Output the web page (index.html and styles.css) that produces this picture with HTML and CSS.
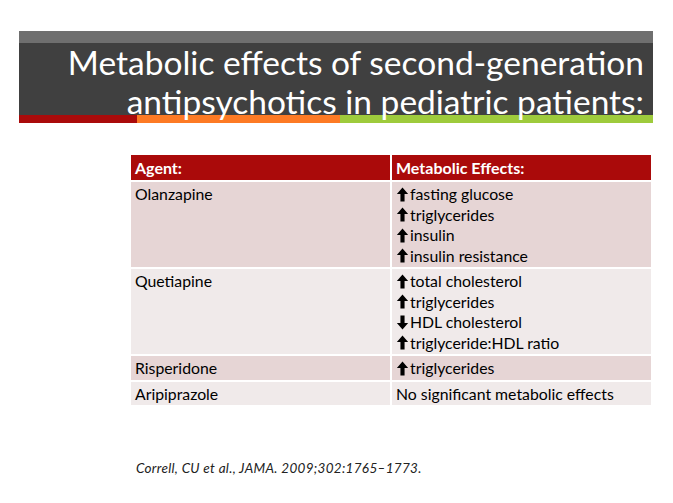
FILE: index.html
```html
<!DOCTYPE html>
<html>
<head>
<meta charset="utf-8">
<link rel="stylesheet" href="styles.css">
</head>
<body>
<div class="slide">
  <div class="banner">
    <div class="banner-top"></div>
    <div class="banner-main">
      <h1 class="title">Metabolic effects of second-generation<br>antipsychotics in pediatric patients:</h1>
    </div>
    <div class="banner-bar">
      <div class="seg red"></div>
      <div class="seg orange"></div>
      <div class="seg green"></div>
    </div>
  </div>

  <table class="effects">
    <thead>
      <tr><th>Agent:</th><th>Metabolic Effects:</th></tr>
    </thead>
    <tbody>
      <tr class="odd">
        <td>Olanzapine</td>
        <td>
          <div class="line"><svg class="arr" viewBox="0 0 12 16"><path d="M6 0.5 L12 7.5 L8.2 7.5 L8.2 15.5 L3.8 15.5 L3.8 7.5 L0 7.5 Z"/></svg>fasting glucose</div>
          <div class="line"><svg class="arr" viewBox="0 0 12 16"><path d="M6 0.5 L12 7.5 L8.2 7.5 L8.2 15.5 L3.8 15.5 L3.8 7.5 L0 7.5 Z"/></svg>triglycerides</div>
          <div class="line"><svg class="arr" viewBox="0 0 12 16"><path d="M6 0.5 L12 7.5 L8.2 7.5 L8.2 15.5 L3.8 15.5 L3.8 7.5 L0 7.5 Z"/></svg>insulin</div>
          <div class="line"><svg class="arr" viewBox="0 0 12 16"><path d="M6 0.5 L12 7.5 L8.2 7.5 L8.2 15.5 L3.8 15.5 L3.8 7.5 L0 7.5 Z"/></svg>insulin resistance</div>
        </td>
      </tr>
      <tr class="even">
        <td>Quetiapine</td>
        <td>
          <div class="line"><svg class="arr" viewBox="0 0 12 16"><path d="M6 0.5 L12 7.5 L8.2 7.5 L8.2 15.5 L3.8 15.5 L3.8 7.5 L0 7.5 Z"/></svg>total cholesterol</div>
          <div class="line"><svg class="arr" viewBox="0 0 12 16"><path d="M6 0.5 L12 7.5 L8.2 7.5 L8.2 15.5 L3.8 15.5 L3.8 7.5 L0 7.5 Z"/></svg>triglycerides</div>
          <div class="line"><svg class="arr" viewBox="0 0 12 16"><path d="M6 15.5 L12 8.5 L8.2 8.5 L8.2 0.5 L3.8 0.5 L3.8 8.5 L0 8.5 Z"/></svg>HDL cholesterol</div>
          <div class="line"><svg class="arr" viewBox="0 0 12 16"><path d="M6 0.5 L12 7.5 L8.2 7.5 L8.2 15.5 L3.8 15.5 L3.8 7.5 L0 7.5 Z"/></svg>triglyceride:HDL ratio</div>
        </td>
      </tr>
      <tr class="odd">
        <td>Risperidone</td>
        <td><div class="line"><svg class="arr" viewBox="0 0 12 16"><path d="M6 0.5 L12 7.5 L8.2 7.5 L8.2 15.5 L3.8 15.5 L3.8 7.5 L0 7.5 Z"/></svg>triglycerides</div></td>
      </tr>
      <tr class="even">
        <td>Aripiprazole</td>
        <td><div class="line">No significant metabolic effects</div></td>
      </tr>
    </tbody>
  </table>

  <p class="cite">Correll, CU et al., JAMA. 2009;302:1765–1773.</p>
</div>
</body>
</html>
```

FILE: styles.css
```css
html, body {
  margin: 0;
  padding: 0;
  background: #ffffff;
}

.slide {
  width: 673px;
  height: 503px;
  overflow: hidden;
  padding-top: 31px;
  box-sizing: border-box;
  font-family: "Lato", "Open Sans", sans-serif;
}

.banner {
  margin-left: 19px;
  width: 634px;
}

.banner-top {
  height: 12px;
  background: #6f6f6f;
}

.banner-main {
  height: 72px;
  background: #404040;
}

.title {
  margin: 0;
  padding: 0 9px 0 0;
  position: relative;
  z-index: 1;
  text-align: right;
  color: #ffffff;
  font-family: "Lato", "Open Sans", sans-serif;
  font-weight: 400;
  font-size: 33.5px;
  line-height: 39px;
  letter-spacing: 0;
}

.banner-bar {
  display: flex;
  height: 8px;
}

.seg.red { width: 118px; background: #aa0a0a; }
.seg.orange { width: 203px; background: #fd7a24; }
.seg.green { flex: 1; background: #9ecb3c; }

.effects {
  margin: 30px 0 0 129px;
  width: 524px;
  border-collapse: separate;
  border-spacing: 2px;
  table-layout: fixed;
  font-size: 15.8px;
  color: #000000;
}

.effects th {
  background: #aa0a0a;
  color: #ffffff;
  font-weight: 700;
  text-align: left;
  height: 25px;
  padding: 0 0 0 4px;
  font-size: 16px;
  vertical-align: middle;
}

.effects td {
  vertical-align: top;
  padding: 2px 4px 1px 4px;
  line-height: 20.5px;
}

.effects tr.odd td { background: #e6d5d5; }
.effects tr.even td { background: #f0eaea; }

.line {
  display: flex;
  align-items: center;
}

.arr {
  width: 13px;
  height: 15px;
  margin-right: 1px;
  fill: #000000;
  flex: none;
}

.cite {
  margin: 53px 0 0 136px;
  font-style: italic;
  font-size: 13.5px;
  letter-spacing: 0.3px;
  color: #222222;
  font-family: "Lato", "Open Sans", sans-serif;
}
```
